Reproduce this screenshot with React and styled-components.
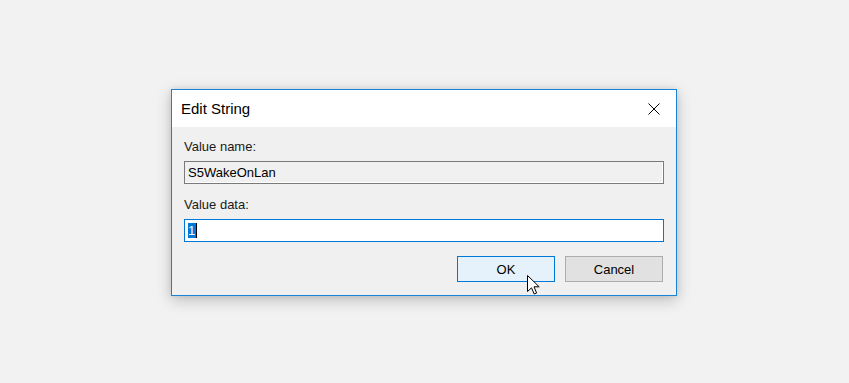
import styled, { createGlobalStyle } from "styled-components";

const GlobalStyle = createGlobalStyle`
  html, body {
    margin: 0;
    padding: 0;
    background: #f2f2f2;
  }
  * {
    box-sizing: border-box;
  }
`;

const Page = styled.div`
  width: 849px;
  height: 383px;
  display: flex;
  align-items: flex-start;
  padding: 89px 0 0 171px;
  font-family: "Liberation Sans", Arial, sans-serif;
  color: #000;
`;

const Dialog = styled.div`
  position: relative;
  width: 506px;
  height: 207px;
  display: flex;
  flex-direction: column;
  background: #f0f0f0;
  border: 1px solid #1883d7;
  box-shadow: 0 4px 14px rgba(0, 0, 0, 0.22), 0 0 6px rgba(0, 0, 0, 0.08);
`;

const TitleBar = styled.div`
  height: 37px;
  display: flex;
  align-items: center;
  justify-content: space-between;
  background: #fff;
  padding-left: 9px;
`;

const Title = styled.span`
  font-size: 15px;
  line-height: 37px;
  margin-top: -1px;
`;

const CloseButton = styled.div`
  width: 44px;
  height: 37px;
  display: flex;
  align-items: center;
  justify-content: center;
`;

const Body = styled.div`
  flex: 1;
  display: flex;
  flex-direction: column;
  padding: 12px 12px 13px 12px;
`;

const Label = styled.div`
  font-size: 13px;
  line-height: 16px;
  color: #1a1a1a;
  margin-top: ${(p) => p.$top || 0}px;
`;

const Field = styled.div`
  height: 23px;
  margin-top: 6px;
  display: flex;
  align-items: center;
  padding-left: 3px;
  font-size: 13px;
  border: 1px solid ${(p) => (p.$focused ? "#0078d7" : "#7a7a7a")};
  background: ${(p) => (p.$focused ? "#fff" : "#f0f0f0")};
  box-shadow: ${(p) => (p.$focused ? "none" : "inset -1px -1px 0 #fff")};
`;

const Selected = styled.span`
  display: inline-block;
  background: #0078d7;
  color: #fff;
  line-height: 15px;
  padding: 0 1px 0 0;
`;

const Caret = styled.span`
  display: inline-block;
  width: 1px;
  height: 15px;
  background: #000;
`;

const ButtonRow = styled.div`
  display: flex;
  justify-content: flex-end;
  gap: 10px;
  margin-top: auto;
  padding-right: 1px;
`;

const Button = styled.div`
  width: 98px;
  height: 26px;
  display: flex;
  align-items: center;
  justify-content: center;
  font-size: 13px;
  border: 1px solid ${(p) => (p.$primary ? "#0078d7" : "#adadad")};
  background: ${(p) => (p.$primary ? "#e5f1fb" : "#e1e1e1")};
`;

const Pointer = styled.svg`
  position: absolute;
  left: 355px;
  top: 185px;
`;

const App = () => {
  return (
    <>
      <GlobalStyle />
      <Page>
        <Dialog>
          <TitleBar>
            <Title>Edit String</Title>
            <CloseButton>
              <svg width="12" height="12" viewBox="0 0 12 12">
                <path d="M0.5 0.5 L11.5 11.5 M11.5 0.5 L0.5 11.5" stroke="#000" strokeWidth="1" />
              </svg>
            </CloseButton>
          </TitleBar>
          <Body>
            <Label>Value name:</Label>
            <Field>S5WakeOnLan</Field>
            <Label $top={13}>Value data:</Label>
            <Field $focused>
              <Selected>1</Selected>
              <Caret />
            </Field>
            <ButtonRow>
              <Button $primary>OK</Button>
              <Button>Cancel</Button>
            </ButtonRow>
          </Body>
          <Pointer width="13" height="20" viewBox="0 0 13 20">
            <path
              d="M0.5 0.5 L0.5 16.5 L4.5 12.8 L7.2 19 L9.6 18 L7 11.8 L12.2 11.8 Z"
              fill="#fff"
              stroke="#000"
              strokeWidth="1"
              strokeLinejoin="miter"
            />
          </Pointer>
        </Dialog>
      </Page>
    </>
  );
};

export default App;
